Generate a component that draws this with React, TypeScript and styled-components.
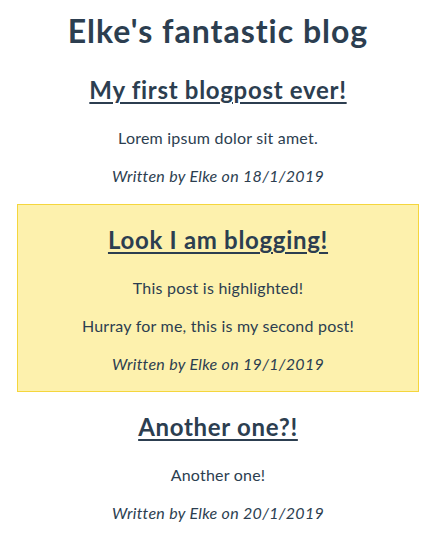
import styled, { createGlobalStyle } from "styled-components";

const GlobalStyle = createGlobalStyle`
  html, body {
    margin: 0;
    padding: 0;
    background: #ffffff;
  }
`;

const AppContainer = styled.div`
  font-family: Lato, "Noto Sans", Helvetica, Arial, sans-serif;
  color: #2c3e50;
  text-align: center;
  padding: 12px 17px 0;
  -webkit-font-smoothing: antialiased;
`;

const BlogTitle = styled.h1`
  font-size: 32px;
  font-weight: 700;
  line-height: 38px;
  letter-spacing: 1px;
  margin: 0 0 24px;
`;

const PostList = styled.div`
  display: block;
`;

const PostCard = styled.article<{ $highlighted?: boolean }>`
  margin: 17px 0;
  ${({ $highlighted }) =>
    $highlighted
      ? `
    background: #fdf1ad;
    border: 1px solid #f5d63d;
  `
      : ""}
`;

const PostTitle = styled.h2`
  font-size: 24px;
  font-weight: 700;
  line-height: 32px;
  letter-spacing: 0.7px;
  margin: 19px 0 21px;
  text-decoration: underline;
  text-decoration-thickness: 2px;
  text-underline-offset: 3px;
`;

const PostText = styled.p<{ $meta?: boolean }>`
  font-size: 16px;
  line-height: 22px;
  margin: 16px 0;
  letter-spacing: ${({ $meta }) => ($meta ? "0.3px" : "0.22px")};
  font-style: ${({ $meta }) => ($meta ? "italic" : "normal")};
`;

type Post = {
  title: string;
  lines: string[];
  date: string;
  highlighted?: boolean;
};

const posts: Post[] = [
  {
    title: "My first blogpost ever!",
    lines: ["Lorem ipsum dolor sit amet."],
    date: "18/1/2019",
  },
  {
    title: "Look I am blogging!",
    lines: ["This post is highlighted!", "Hurray for me, this is my second post!"],
    date: "19/1/2019",
    highlighted: true,
  },
  {
    title: "Another one?!",
    lines: ["Another one!"],
    date: "20/1/2019",
  },
];

export default function App() {
  return (
    <>
      <GlobalStyle />
      <AppContainer>
        <BlogTitle>Elke's fantastic blog</BlogTitle>
        <PostList>
          {posts.map((post) => (
            <PostCard key={post.title} $highlighted={post.highlighted}>
              <PostTitle>{post.title}</PostTitle>
              {post.lines.map((line) => (
                <PostText key={line}>{line}</PostText>
              ))}
              <PostText $meta>Written by Elke on {post.date}</PostText>
            </PostCard>
          ))}
        </PostList>
      </AppContainer>
    </>
  );
}
